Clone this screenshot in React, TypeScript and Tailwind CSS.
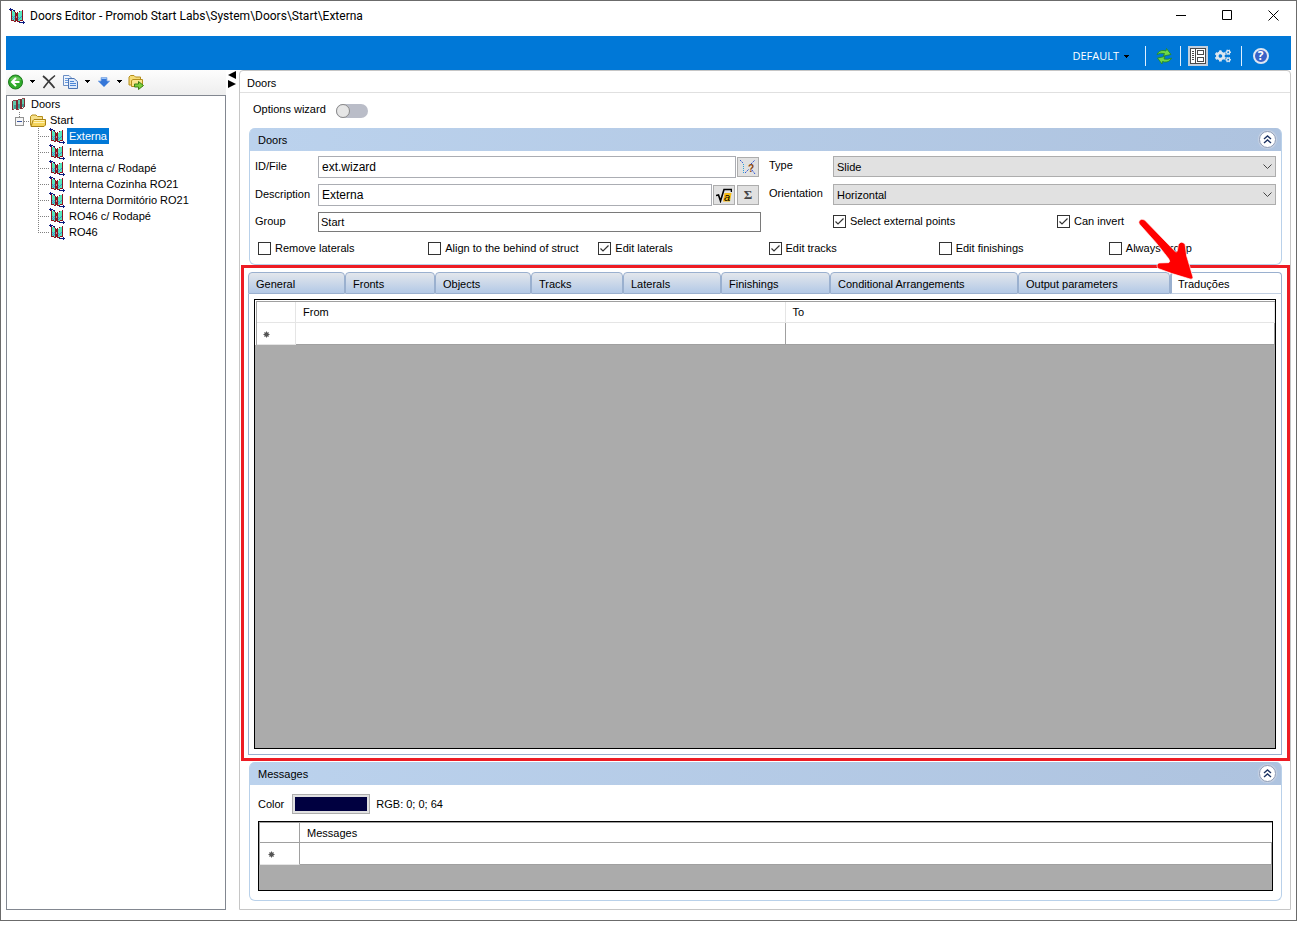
import { useState } from "react";
import type { ReactNode } from "react";
import { FaCogs } from "react-icons/fa";

function DoorIcon() {
  return (
    <svg width="16" height="16" viewBox="0 0 16 16" shapeRendering="crispEdges" className="shrink-0" aria-hidden="true">
      <path d="M3 3H5V4H6V13H5V12H3z" fill="#55e6bd" />
      <path d="M3 8h1v1h-1zM4 9h1v1h-1zM5 10h1v1h-1zM3 10h1v1h-1zM4 11h1v1h-1zM5 8h1v1h-1z" fill="#3a8fd0" />
      <path d="M9 5H10V4H11V3H13V12H11V13H9z" fill="#55e6bd" />
      <path d="M9 9h1v1h-1zM10 10h1v1h-1zM11 9h1v1h-1zM9 11h1v1h-1zM12 8h1v1h-1z" fill="#3a8fd0" />
      <path d="M2 2h1v11h-1zM6 4h1v10h-1zM8 4h1v10h-1zM13 2h1v11h-1z" fill="#8a1420" />
      <path d="M7 5h1v3h-1zM7 10h1v3h-1zM5 3h1v1h-1zM3 12h2v1h-2zM5 13h1v1h-1zM11 12h2v1h-2zM9 13h2v1h-2zM10 3h1v1h-1z" fill="#8a1420" />
      <path d="M7 8h1v2h-1z" fill="#c98f8f" />
      <path d="M0 1h4v1h-4zM1 0h1v3h-1zM4 2h2v1h-2zM12 14h4v1h-4zM14 13h1v3h-1zM10 14h2v1h-2z" fill="#0b1a80" />
    </svg>
  );
}

function DoorsRootIcon() {
  return (
    <svg width="16" height="16" viewBox="0 0 16 16" shapeRendering="crispEdges" className="shrink-0" aria-hidden="true">
      <path d="M2 5h3v8h-3zM6 4h3v9h-3zM11 3h2v8h-2z" fill="#62c9ac" />
      <path d="M3 9h2v4h-2zM7 8h2v4h-2zM11 8h2v3h-2z" fill="#3f9c93" />
      <path d="M1 5h1v9h-1zM5 4h1v10h-1zM6 4h1v10h-1zM9 3h1v10h-1zM10 3h1v10h-1zM13 2h1v9h-1z" fill="#7c2b33" />
      <path d="M2 4h3v1h-3zM7 3h2v1h-2zM11 2h3v1h-3zM2 13h1v1h-1zM7 13h1v1h-1zM11 12h1v1h-1zM12 11h1v1h-1z" fill="#8d4a4d" />
    </svg>
  );
}

function FolderIcon() {
  return (
    <svg width="17" height="16" viewBox="0 0 17 16" className="shrink-0" aria-hidden="true">
      <path d="M.5 13.500V4.500L2 3H6L7.500 4.500H12.500V7" fill="#f6e08b" stroke="#b58e1b" />
      <path d="M1 14.500L3 8.500L4 7.500H15.500V13L14 14.500z" fill="#f4d35a" stroke="#a98115" />
      <path d="M4 8.500H14.500M3.500 10.500H14.500" stroke="#fff3b8" />
    </svg>
  );
}

function BackIcon() {
  return (
    <svg width="16" height="16" viewBox="0 0 16 16" aria-hidden="true">
      <circle cx="8.500" cy="8" r="7" fill="#2fab2b" stroke="#1c7a1c" />
      <path d="M3 6A6 6 0 0 1 14 6Q8.500 8 3 6" fill="#8fdc7c" opacity=".6" />
      <path d="M12.500 8H6M9 4L5 8L9 12" fill="none" stroke="#fff" strokeWidth="2" />
    </svg>
  );
}

function DeleteIcon() {
  return (
    <svg width="16" height="16" viewBox="0 0 16 16" aria-hidden="true">
      <path d="M2 2Q7 6 13.500 14" fill="none" stroke="#3a3a3a" strokeWidth="1.800" />
      <path d="M14 1.500Q8 6 2.500 14" fill="none" stroke="#3a3a3a" strokeWidth="1.500" />
    </svg>
  );
}

function CopyIcon() {
  return (
    <svg width="16" height="16" viewBox="0 0 16 16" aria-hidden="true">
      <path d="M1.500 1.500H7L9.500 4V11.500H1.500z" fill="#eef4fd" stroke="#6b8fc4" />
      <path d="M3 4.500H7M3 6.500H7M3 8.500H7" stroke="#6b9bdc" />
      <path d="M6.500 4.500H12L15.500 7.500V14.500H6.500z" fill="#dce9fb" stroke="#4a74b4" />
      <path d="M8 7.500H12M8 9.500H14M8 11.500H14" stroke="#4c86d6" />
    </svg>
  );
}

function DownIcon() {
  return (
    <svg width="14" height="14" viewBox="0 0 14 14" aria-hidden="true">
      <path d="M5 2.500H11V6H14L8 12L2 6H5z" fill="#3577d8" stroke="#8fb2e6" strokeWidth=".8" />
      <path d="M5.500 3.500H10.500" stroke="#9cc6fa" />
    </svg>
  );
}

function FolderExportIcon() {
  return (
    <svg width="16" height="16" viewBox="0 0 16 16" aria-hidden="true">
      <path d="M1 11V3L2.500 1.500H6L7.500 3H12.500V11z" fill="#f6dd78" stroke="#b58e1b" />
      <path d="M3.500 12.500V6.500L5 5.500H14.500V12.500z" fill="#f9e48d" stroke="#b58e1b" />
      <path d="M6.500 10H10.500V7.500L15.500 11.500L10.500 15.500V13H6.500z" fill="#7bd13a" stroke="#3c7d16" />
    </svg>
  );
}

function RefreshIcon() {
  return (
    <svg width="18" height="18" viewBox="0 0 18 18" aria-hidden="true">
      <path d="M2 7.500Q4 3 9 3.500L11 4L11.500 1.500L16 7.500L8.500 9L9.500 6.500Q5.500 5.500 2 7.500z" fill="#6fd848" stroke="#23851f" strokeWidth=".8" />
      <path d="M16.500 11Q14.500 15.500 9.500 15L7.500 14.500L7 17L2.500 11L10 9.500L9 12Q13 13 16.500 11z" fill="#6fd848" stroke="#23851f" strokeWidth=".8" />
    </svg>
  );
}

function LayoutIcon() {
  return (
    <svg width="16" height="16" viewBox="0 0 16 16" aria-hidden="true">
      <rect x=".5" y=".5" width="15" height="15" fill="#fff" stroke="#4a4a4a" />
      <path d="M5.500 1V15" stroke="#4a4a4a" />
      <path d="M2 3.500H4M2 5.500H4M2 7.500H4M2 9.500H4M2 11.500H4" stroke="#4a4a4a" />
      <rect x="7.500" y="2.500" width="6" height="4" fill="none" stroke="#4a4a4a" />
      <rect x="7.500" y="9.500" width="6" height="4" fill="none" stroke="#4a4a4a" />
    </svg>
  );
}

function PointsIcon() {
  return (
    <svg width="16" height="16" viewBox="0 0 16 16" aria-hidden="true">
      <path d="M0 1L3 4M11 5L15 1M5 14L9 10M12 11L15 15" stroke="#3158d6" strokeDasharray="2 1" />
      <path d="M3.500 5V14" stroke="#2c9fd8" strokeDasharray="1 1" />
    </svg>
  );
}

function Caret() {
  return (
    <svg width="5" height="3" viewBox="0 0 5 3" shapeRendering="crispEdges" aria-hidden="true">
      <path d="M0 0H5V1H4V2H3V3H2V2H1V1H0z" fill="#000" />
    </svg>
  );
}

function ToolButton({ label, className = "", children }: { label: string; className?: string; children: ReactNode }) {
  return (
    <button type="button" aria-label={label} className={`flex h-5 shrink-0 items-center justify-center ${className}`}>
      {children}
    </button>
  );
}

function TitleBar() {
  return (
    <header className="flex h-[35px] shrink-0 items-start bg-white pl-2">
      <div className="flex h-[29px] min-w-0 flex-1 items-center gap-[5px]">
        <DoorIcon />
        <h1 className="font-[Roboto,sans-serif] text-[12px] leading-4">Doors Editor - Promob Start Labs\System\Doors\Start\Externa</h1>
      </div>
      <ToolButton label="Minimize" className="mt-1 w-[46px]">
        <svg width="10" height="11" aria-hidden="true"><path d="M0 5.500H10" stroke="#000" /></svg>
      </ToolButton>
      <ToolButton label="Maximize" className="mt-1 w-[46px]">
        <svg width="10" height="10" aria-hidden="true"><path d="M.5 .5H9.500V9.500H.5z" fill="none" stroke="#000" /></svg>
      </ToolButton>
      <ToolButton label="Close" className="mt-1 w-[46px]">
        <svg width="11" height="11" aria-hidden="true"><path d="M.5 .5L10.500 10.500M10.500 .5L.5 10.500" stroke="#000" /></svg>
      </ToolButton>
    </header>
  );
}

function CommandBar() {
  return (
    <div className="flex h-[34px] shrink-0 items-end justify-end bg-[#0078d7] pr-[22px] pb-1 font-['Open_Sans','Noto_Sans',sans-serif]">
      <button type="button" className="flex h-5 items-center gap-[5px] text-[11px] text-white">
        DEFAULT
        <Caret />
      </button>
      <span className="ml-4 h-5 w-px bg-[#dfefff]" />
      <ToolButton label="Refresh" className="ml-[9px] w-[18px]"><RefreshIcon /></ToolButton>
      <span className="ml-[7px] h-5 w-px bg-[#dfefff]" />
      <ToolButton label="Panel view" className="ml-[7px] w-5 bg-[#c3cfdd]"><LayoutIcon /></ToolButton>
      <ToolButton label="Settings" className="ml-1.5 w-[18px]"><FaCogs className="size-4 text-[#dce6ef]" /></ToolButton>
      <span className="ml-[9px] h-5 w-px bg-[#dfefff]" />
      <ToolButton label="Help" className="ml-[10px] w-[17px]">
        <span className="flex size-4 items-center justify-center rounded-full border-2 border-[#dfe6f2] bg-[#3a62c8] text-[12px] leading-[12px] font-bold text-white">?</span>
      </ToolButton>
    </div>
  );
}

const treeItems = [
  "Externa",
  "Interna",
  "Interna c/ Rodapé",
  "Interna Cozinha RO21",
  "Interna Dormitório RO21",
  "RO46 c/ Rodapé",
  "RO46",
];

function Sidebar() {
  const [selected, setSelected] = useState("Externa");
  return (
    <aside className="flex w-[220px] shrink-0 flex-col">
      <div className="flex h-[25px] items-center bg-linear-to-b from-[#fdfdfd] to-[#eeeeee] pb-0.5 pl-px">
        <ToolButton label="Add"><BackIcon /></ToolButton>
        <ToolButton label="Add options" className="w-[18px]"><Caret /></ToolButton>
        <ToolButton label="Delete"><DeleteIcon /></ToolButton>
        <ToolButton label="Copy" className="ml-[5px]"><CopyIcon /></ToolButton>
        <ToolButton label="Copy options" className="w-[18px]"><Caret /></ToolButton>
        <ToolButton label="Move down"><DownIcon /></ToolButton>
        <ToolButton label="Move options" className="w-[18px]"><Caret /></ToolButton>
        <ToolButton label="Export folder"><FolderExportIcon /></ToolButton>
      </div>
      <nav className="flex-1 border border-[#828790] bg-white pl-1">
        <div className="flex h-4 items-center gap-1">
          <DoorsRootIcon />
          <span>Doors</span>
        </div>
        <div className="flex h-4 items-center">
          <button type="button" aria-label="Collapse Start" className="ml-[3px] h-4">
            <svg width="16" height="16" viewBox="0 0 16 16" shapeRendering="crispEdges" aria-hidden="true">
              <path d="M5.500 0V5M10 9.500H16" stroke="#808080" strokeDasharray="1 1" />
              <rect x="1.500" y="5.500" width="8" height="8" fill="#f6f6f6" stroke="#919191" />
              <path d="M3 9.500H8" stroke="#3b55a0" />
            </svg>
          </button>
          <FolderIcon />
          <span className="ml-[3px]">Start</span>
        </div>
        <ul className="pl-[27px]">
          {treeItems.map((item, i) => (
            <li key={item} className="flex h-4 items-center">
              <svg width="11" height="16" viewBox="0 0 11 16" shapeRendering="crispEdges" aria-hidden="true">
                <path d={i === treeItems.length - 1 ? "M.5 0V9" : "M.5 0V16"} stroke="#808080" strokeDasharray="1 1" />
                <path d="M2 8.500H11" stroke="#808080" strokeDasharray="1 1" />
              </svg>
              <DoorIcon />
              <button
                type="button"
                onClick={() => setSelected(item)}
                className={`ml-0.5 h-4 px-0.5 leading-4 ${item === selected ? "bg-[#0078d7] text-white" : ""}`}
              >
                {item}
              </button>
            </li>
          ))}
        </ul>
      </nav>
    </aside>
  );
}

function CheckBox({ label, checked = false }: { label: string; checked?: boolean }) {
  return (
    <label className="flex items-center gap-1 whitespace-nowrap">
      <span className="grid size-[13px] shrink-0">
        <input
          type="checkbox"
          defaultChecked={checked}
          className="peer col-start-1 row-start-1 size-[13px] appearance-none border border-[#333333] bg-white"
        />
        <svg viewBox="0 0 13 13" className="pointer-events-none invisible col-start-1 row-start-1 size-[13px] peer-checked:visible" aria-hidden="true">
          <path d="M2.500 6.500L5 9L10.500 3.500" fill="none" stroke="#333" strokeWidth="1.200" />
        </svg>
      </span>
      {label}
    </label>
  );
}

function SelectBox({ id, value }: { id: string; value: string }) {
  return (
    <div className="grid h-[21px] items-center">
      <select id={id} className="col-start-1 row-start-1 h-[21px] w-full appearance-none border border-[#adadad] bg-[#e1e1e1] pl-[3px]">
        <option>{value}</option>
      </select>
      <svg width="9" height="6" viewBox="0 0 9 6" className="pointer-events-none col-start-1 row-start-1 mr-1 justify-self-end" aria-hidden="true">
        <path d="M.5 .5L4.500 4.500L8.500 .5" fill="none" stroke="#444" />
      </svg>
    </div>
  );
}

function PanelHeader({ title }: { title: string }) {
  return (
    <div className="flex h-[23px] items-center justify-between rounded-t-[5px] bg-linear-to-r from-[#bbd2ed] to-[#aec3df] pr-[5px] pl-2">
      <h2>{title}</h2>
      <button
        type="button"
        aria-label={`Collapse ${title}`}
        className="flex size-[17px] items-center justify-center rounded-full border border-[#8d9bb5] bg-white shadow-[0_0_1px_1px_#c9d3e4]"
      >
        <svg width="9" height="9" viewBox="0 0 9 9" aria-hidden="true">
          <path d="M1 4L4.500 1L8 4M1 8L4.500 5L8 8" fill="none" stroke="#1f3564" strokeWidth="1.400" />
        </svg>
      </button>
    </div>
  );
}

const squareButton = "flex h-5 w-[22px] shrink-0 items-center justify-center border border-[#adadad] bg-[#e1e1e1]";

function DoorsForm() {
  return (
    <section className="mr-2 ml-[9px] rounded-[6px] border border-[#b9d1ea] border-t-0 bg-white">
      <PanelHeader title="Doors" />
      <div className="grid grid-cols-[63px_minmax(0,1fr)_72px_minmax(0,1fr)] gap-y-1.5 pt-[5px] pr-[5px] pl-[5px]">
        <label htmlFor="file" className="pt-[3px]">ID/File</label>
        <div className="mr-0.5 flex items-center gap-px">
          <input id="file" defaultValue="ext.wizard" className="h-[22px] min-w-0 flex-1 border border-[#abadb3] px-[3px] text-[12px]" />
          <button type="button" aria-label="Pick points" className={squareButton}>
            <span className="grid">
              <span className="col-start-1 row-start-1"><PointsIcon /></span>
              <span className="col-start-1 row-start-1 self-end justify-self-end pr-0.5 text-[10px] leading-3 font-bold text-[#8a4208]">?</span>
            </span>
          </button>
        </div>
        <label htmlFor="type" className="pt-0.5 pl-2">Type</label>
        <SelectBox id="type" value="Slide" />

        <label htmlFor="description" className="pt-[3px]">Description</label>
        <div className="mr-0.5 flex items-center gap-px">
          <input id="description" defaultValue="Externa" className="h-[22px] min-w-0 flex-1 border border-[#abadb3] px-[3px] text-[12px]" />
          <button type="button" aria-label="Formula" className={`${squareButton} mr-px`}>
            <span className="grid">
              <svg width="16" height="16" viewBox="0 0 16 16" className="col-start-1 row-start-1" aria-hidden="true">
                <path d="M8.500 6H15.500L14 14.500H7z" fill="#f9bd10" />
                <path d="M0 8.500L2.500 8L4.500 14L8 2.500H15.500V5" fill="none" stroke="#000" strokeWidth="1.600" />
              </svg>
              <span className="col-start-1 row-start-1 self-end justify-self-end pr-0.5 text-[11px] leading-[11px] italic">a</span>
            </span>
          </button>
          <button type="button" aria-label="Sum" className={`${squareButton} font-['Liberation_Serif',serif] text-[13px] font-bold text-[#444444]`}>Σ</button>
        </div>
        <label htmlFor="orientation" className="pt-0.5 pl-2">Orientation</label>
        <SelectBox id="orientation" value="Horizontal" />

        <label htmlFor="group" className="pt-0.5">Group</label>
        <input id="group" defaultValue="Start" className="h-5 min-w-0 border border-[#7a7a7a] px-0.5" />
        <div className="col-start-4 grid h-[18px] grid-cols-2 gap-[5px]">
          <CheckBox label="Select external points" checked />
          <CheckBox label="Can invert" checked />
        </div>
      </div>
      <div className="grid h-8 grid-cols-6 items-center pr-0.5 pl-2">
        <CheckBox label="Remove laterals" />
        <CheckBox label="Align to the behind of struct" />
        <CheckBox label="Edit laterals" checked />
        <CheckBox label="Edit tracks" checked />
        <CheckBox label="Edit finishings" />
        <CheckBox label="Always group" />
      </div>
    </section>
  );
}

const tabs = [
  { name: "General", width: "w-[97px]" },
  { name: "Fronts", width: "w-[90px]" },
  { name: "Objects", width: "w-[96px]" },
  { name: "Tracks", width: "w-[92px]" },
  { name: "Laterals", width: "w-[98px]" },
  { name: "Finishings", width: "w-[109px]" },
  { name: "Conditional Arrangements", width: "w-[188px]" },
  { name: "Output parameters", width: "w-[152px]" },
  { name: "Traduções", width: "flex-1" },
];

function NewRowMark() {
  return (
    <svg width="7" height="7" viewBox="0 0 7 7" aria-hidden="true">
      <circle cx="3.500" cy="3.500" r="2.300" fill="#444" />
      <path d="M3.500 .5V6.500M.5 3.500H6.500M1.500 1.500L5.500 5.500M5.500 1.500L1.500 5.500" stroke="#555" strokeWidth="1" />
    </svg>
  );
}

function Translations() {
  const [active, setActive] = useState("Traduções");
  return (
    <section className="relative ml-px flex flex-1 flex-col border-[3px] border-[#ed1c24] pt-1 pr-[5px] pb-[3px] pl-1">
      <div role="tablist" className="flex h-[22px]">
        {tabs.map((tab) => (
          <button
            key={tab.name}
            type="button"
            role="tab"
            aria-selected={tab.name === active}
            onClick={() => setActive(tab.name)}
            className={`rounded-t-[4px] border border-[#9ab0cf] pt-0.5 text-left whitespace-nowrap ${tab.width} ${
              tab.name === active ? "border-l-2 border-b-[#c3d0e2] bg-white pl-1.5" : "bg-linear-to-b from-[#e3e7ec] to-[#b3c9e6] pl-[7px]"
            }`}
          >
            {tab.name}
          </button>
        ))}
      </div>
      <div className="flex flex-1 flex-col border border-t-0 border-[#9ab0cf] p-[5px]">
        <div className="flex-1 border border-black bg-[#ababab]">
          <div className="bg-white pt-px pl-px">
            <table className="w-full table-fixed border-separate border-spacing-0 border-t border-l border-[#a0a0a0] text-left">
              <thead>
                <tr className="h-[21px]">
                  <th className="w-[39px] border-r border-b border-[#e5e5e5]" />
                  <th className="border-r border-b border-[#e5e5e5] p-0 pl-[7px] font-normal">From</th>
                  <th className="border-r border-b border-[#e5e5e5] p-0 pl-[7px] font-normal">To</th>
                </tr>
              </thead>
              <tbody>
                <tr className="h-[22px]">
                  <td className="border-r border-b border-[#e5e5e5] p-0 pt-0.5 pl-1.5"><NewRowMark /></td>
                  <td className="border-r border-b border-[#a0a0a0] p-0" />
                  <td className="border-r border-b border-[#a0a0a0] p-0" />
                </tr>
              </tbody>
            </table>
          </div>
        </div>
      </div>
      <svg width="58" height="64" viewBox="0 0 174 192" className="pointer-events-none absolute -top-[52px] right-[93px]" aria-hidden="true">
        <path
          d="M10 14Q16 6 26 12L119 108Q124 110 125 100L127 86Q134 72 147 84L152 120L171 184Q170 192 162 189L106 172L68 158Q58 150 68 141L98 140Q104 138 98 128L60 80L10 24Q7 18 10 14z"
          fill="#ff0000"
          stroke="#fff"
          strokeWidth="2"
        />
      </svg>
    </section>
  );
}

function Messages() {
  return (
    <section className="mt-px mr-2 mb-2 ml-[9px] rounded-[6px] border border-t-0 border-[#b9d1ea] bg-white">
      <PanelHeader title="Messages" />
      <div className="flex h-9 items-center pt-px pl-2">
        <span>Color</span>
        <button type="button" aria-label="Choose color" className="ml-2 flex h-5 w-[78px] border border-[#adadad] bg-[#e1e1e1] p-0.5">
          <span className="flex-1 bg-[#000040]" />
        </button>
        <span className="ml-1.5">RGB: 0; 0; 64</span>
      </div>
      <div className="mr-2 mb-[9px] ml-2 h-[70px] border border-black bg-[#ababab]">
        <table className="w-full table-fixed border-separate border-spacing-0 border-t border-l border-[#a0a0a0] bg-white text-left">
          <thead>
            <tr className="h-5">
              <th className="w-10 border-r border-b border-[#a0a0a0]" />
              <th className="border-b border-[#a0a0a0] p-0 pl-[7px] font-normal">Messages</th>
            </tr>
          </thead>
          <tbody>
            <tr className="h-[22px]">
              <td className="border-r border-b border-[#a0a0a0] border-b-[#e5e5e5] p-0 pt-0.5 pl-2"><NewRowMark /></td>
              <td className="border-r border-b border-[#a0a0a0] p-0" />
            </tr>
          </tbody>
        </table>
      </div>
    </section>
  );
}

export default function App() {
  return (
    <div className="flex min-h-screen bg-white pr-[14px] pb-1.5 font-['Liberation_Sans',Arial,sans-serif] text-[11px] leading-[14px] text-black">
      <div className="flex min-w-0 flex-1 flex-col border border-[#6b6b6b]">
        <TitleBar />
        <div className="flex flex-1 flex-col px-[5px] pb-[10px]">
          <CommandBar />
          <div className="flex flex-1">
            <Sidebar />
            <div className="w-[13px] shrink-0 pl-0.5">
              <button type="button" aria-label="Toggle sidebar" className="mt-px">
                <svg width="8" height="17" viewBox="0 0 8 17" aria-hidden="true">
                  <path d="M8 0V8L0 4zM0 9V17L8 13z" fill="#000" />
                </svg>
              </button>
            </div>
            <main className="flex min-w-0 flex-1 flex-col rounded-t-[4px] border border-[#c6c6c6]">
              <div className="flex h-[22px] items-center border-b border-[#e0e0e0] pt-0.5 pl-[7px]">Doors</div>
              <div className="flex h-[35px] items-center pb-1 pl-[13px]">
                <label htmlFor="wizard">Options wizard</label>
                <span className="mt-1 ml-[10px] grid h-[14px] w-8">
                  <input id="wizard" type="checkbox" role="switch" className="peer col-start-1 row-start-1 h-[14px] w-8 appearance-none rounded-full bg-[#babdc8]" />
                  <span className="pointer-events-none col-start-1 row-start-1 size-[14px] rounded-full border border-[#8a8a8a] bg-[#e6e6e6] peer-checked:justify-self-end" />
                </span>
              </div>
              <DoorsForm />
              <Translations />
              <Messages />
            </main>
          </div>
        </div>
      </div>
    </div>
  );
}
